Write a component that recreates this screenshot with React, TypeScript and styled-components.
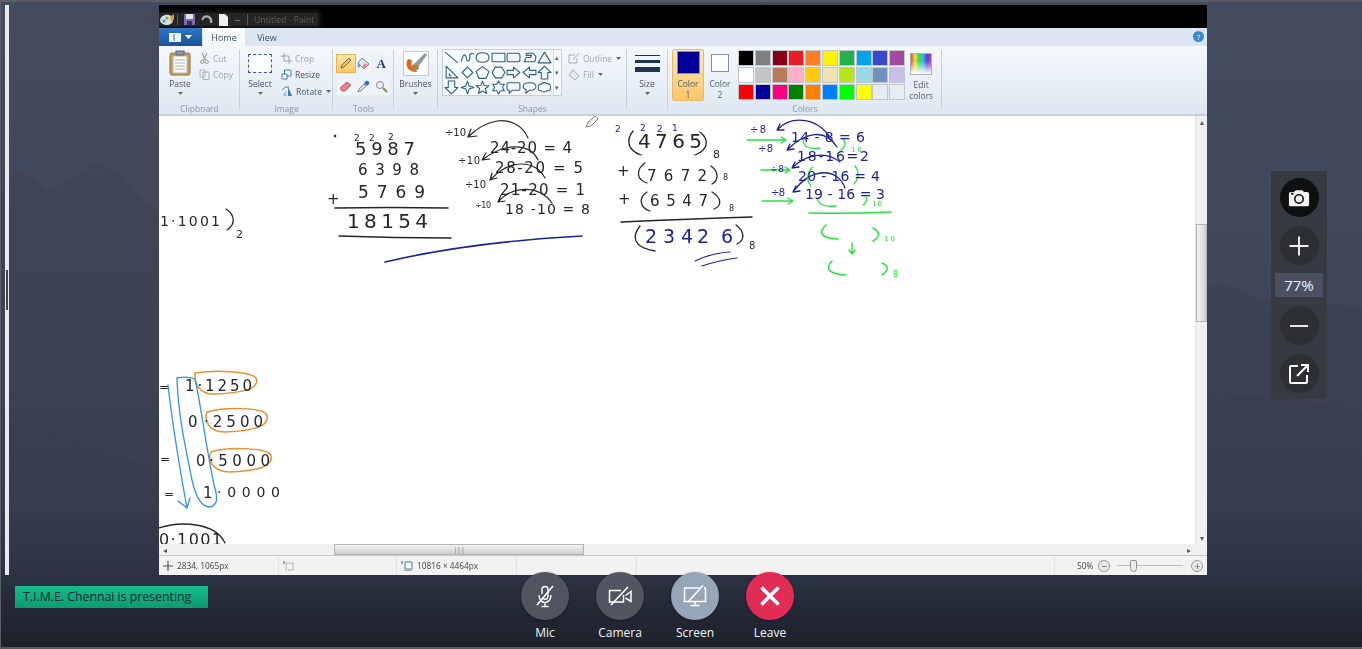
import React from "react";
import styled, { createGlobalStyle } from "styled-components";

const GlobalStyle = createGlobalStyle`
  html, body { margin: 0; padding: 0; background: #1a1d26; }
  * { box-sizing: border-box; }
`;

const UI_FONT = `"Open Sans", "Noto Sans", sans-serif`;

const ROW_ONE = ["#000000", "#7f7f7f", "#880015", "#ed1c24", "#ff7f27", "#fff200", "#22b14c", "#00a2e8", "#3f48cc", "#a349a4"];
const ROW_TWO = ["#ffffff", "#c3c3c3", "#b97a57", "#ffaec9", "#ffc90e", "#efe4b0", "#b5e61d", "#99d9ea", "#7092be", "#c8bfe7"];
const ROW_THREE = ["#ff0000", "#000099", "#ff0080", "#008000", "#ff8000", "#0080ff", "#00ff00", "#ffff00", "#e6edf5", "#e6edf5"];

const SHAPES = [
  "M1 2 L13 12",
  "M1 11 C3 3 5 3 6 8 C7 12 10 10 9 5 C9 3 12 3 13 4",
  "M7 2.5 C11 2.5 13 4.5 13 7 C13 9.5 11 11.5 7 11.5 C3 11.5 1 9.5 1 7 C1 4.5 3 2.5 7 2.5Z",
  "M1 3 H13 V11 H1Z",
  "M3 3 H11 Q13 3 13 5 V9 Q13 11 11 11 H3 Q1 11 1 9 V5 Q1 3 3 3Z",
  "M4 3 H10 L13 6 L12 11 H2 L4 7 H8 L9 5 H4Z",
  "M7 2 L13 12 H1Z",
  "M2 1 L13 12 H2Z M5 8 V10 H7",
  "M7 2 L12 7 L7 12 L2 7Z",
  "M7 1.5 L13 6 L10.5 12.5 H3.5 L1 6Z",
  "M4 2 H10 L13 7 L10 12 H4 L1 7Z",
  "M1 5 H7 V2 L13 7 L7 12 V9 H1Z",
  "M13 5 H7 V2 L1 7 L7 12 V9 H13Z",
  "M7 1 L13 7 H10 V13 H4 V7 H1Z",
  "M4 1 H10 V7 H13 L7 13 L1 7 H4Z",
  "M7 1 L8.5 5.5 L13 7 L8.5 8.5 L7 13 L5.5 8.5 L1 7 L5.5 5.5Z",
  "M7 1 L8.6 5.2 L13 5.4 L9.6 8.2 L10.8 12.6 L7 10.2 L3.2 12.6 L4.4 8.2 L1 5.4 L5.4 5.2Z",
  "M7 1 L8.8 4 H12.5 L10.6 7 L12.5 10 H8.8 L7 13 L5.2 10 H1.5 L3.4 7 L1.5 4 H5.2Z",
  "M2 2.5 H12 Q13 2.5 13 3.5 V8.5 Q13 9.5 12 9.5 H6 L3 12.5 V9.5 H2 Q1 9.5 1 8.5 V3.5 Q1 2.5 2 2.5Z",
  "M7 2.5 C11 2.5 13 4 13 6 C13 8 11 9.5 7 9.5 L3.5 12.5 L4 9 C2 8.5 1 7.5 1 6 C1 4 3 2.5 7 2.5Z",
  "M4 4 C5 2 8 2 9 3.5 C11 3 13 4.5 12.5 6.5 C13.5 8.5 11.5 10.5 9.5 9.8 C8 11.5 5 11.5 4 10 C2 10.5 0.5 8.5 1.5 7 C0.5 5.5 2 3.5 4 4Z",
];

type InkText = [string, number, number, number, number, string];

const BLACK = "#26262a";
const NAVY = "#1f2296";
const GREEN = "#27e23c";

const INK_TEXT: InkText[] = [
  ["2", 354, 141, 7, 9, BLACK], ["2", 369, 141, 7, 9, BLACK], ["2", 388, 140, 7, 9, BLACK],
  ["5987", 355, 155, 60, 18, BLACK],
  ["6398", 358, 175, 61, 15, BLACK],
  ["+", 327, 204, 10, 15, BLACK],
  ["5769", 358, 198, 67, 17, BLACK],
  ["18154", 347, 228, 81, 20, BLACK],
  ["÷10", 445, 136, 21, 10, BLACK],
  ["24-20 = 4", 490, 153, 82, 15, BLACK],
  ["÷10", 458, 164, 22, 10, BLACK],
  ["28-20 = 5", 495, 173, 88, 15, BLACK],
  ["÷10", 465, 188, 21, 10, BLACK],
  ["21-20 = 1", 500, 195, 85, 15, BLACK],
  ["÷10", 475, 208, 16, 8, BLACK],
  ["18 -10 = 8", 505, 214, 85, 14, BLACK],
  ["2", 615, 132, 7, 9, NAVY], ["2", 640, 131, 7, 9, NAVY], ["2", 657, 132, 7, 9, NAVY], ["1", 672, 131, 6, 9, NAVY],
  ["4765", 638, 148, 64, 20, BLACK],
  ["8", 713, 158, 8, 11, BLACK],
  ["+", 617, 176, 11, 15, BLACK],
  ["7672", 647, 181, 60, 15, BLACK],
  ["8", 723, 180, 7, 8, BLACK],
  ["+", 618, 204, 11, 15, BLACK],
  ["6547", 650, 206, 58, 15, BLACK],
  ["8", 729, 211, 7, 8, BLACK],
  ["234", 645, 243, 48, 19, NAVY],
  ["26", 697, 243, 36, 19, NAVY],
  ["8", 749, 249, 8, 10, BLACK],
  ["÷8", 750, 133, 16, 10, NAVY],
  ["14 - 8 = 6", 791, 142, 74, 14, NAVY],
  ["÷8", 758, 152, 15, 10, NAVY],
  ["18-16=2", 797, 161, 72, 14, NAVY],
  ["10", 851, 152, 11, 7, GREEN],
  ["÷8", 770, 172, 14, 9, NAVY],
  ["20 - 16 = 4", 798, 181, 82, 14, NAVY],
  ["÷8", 771, 196, 14, 10, NAVY],
  ["19 - 16 = 3", 805, 199, 80, 14, NAVY],
  ["10", 872, 206, 10, 7, GREEN],
  ["10", 884, 241, 11, 7, GREEN],
  ["8", 893, 277, 7, 8, GREEN],
  ["1·1001", 160, 226, 60, 14, BLACK],
  ["2", 236, 238, 8, 11, BLACK],
  ["=", 159, 391, 7, 12, BLACK],
  ["1·1250", 185, 391, 67, 15, BLACK],
  ["0", 188, 427, 12, 15, BLACK],
  ["·2500", 204, 427, 59, 15, BLACK],
  ["=", 160, 463, 8, 12, BLACK],
  ["0", 196, 466, 12, 15, BLACK],
  ["·5000", 209, 466, 61, 15, BLACK],
  ["=", 164, 498, 9, 12, BLACK],
  ["1", 203, 498, 8, 15, BLACK],
  ["·0000", 217, 497, 63, 14, BLACK],
  ["0·1001", 159, 545, 63, 16, BLACK],
];

type InkStroke = [string, string, number];

const INK_STROKES: InkStroke[] = [
  ["M335 208 Q390 207 448 208", BLACK, 1.5],
  ["M339 236 Q395 238 451 238", BLACK, 1.5],
  ["M385 262 Q470 242 582 236", NAVY, 1.6],
  ["M226 209 C235 215 236 224 227 230", BLACK, 1.3],
  ["M528 138 C522 124 508 119 497 121 C485 123 476 129 468 137 M468 137 L477 136 M468 137 L471 129", BLACK, 1.2],
  ["M538 160 C530 143 505 142 482 160 M482 160 L490 159 M482 160 L486 153", BLACK, 1.2],
  ["M545 178 C535 160 510 158 490 180 M490 180 L497 178 M490 180 L492 173", BLACK, 1.2],
  ["M552 203 C538 184 512 186 498 202 M498 202 L505 201 M498 202 L501 195", BLACK, 1.2],
  ["M633 131 C626 140 627 150 641 155", BLACK, 1.3],
  ["M700 132 C710 140 708 150 695 155", BLACK, 1.3],
  ["M645 163 C635 170 637 180 647 183", BLACK, 1.3],
  ["M711 166 C719 172 719 180 712 184", BLACK, 1.3],
  ["M647 192 C638 198 640 208 650 211", BLACK, 1.3],
  ["M712 192 C722 198 722 206 714 209", BLACK, 1.3],
  ["M621 222 Q690 219 752 217", BLACK, 1.5],
  ["M640 226 C632 236 632 247 655 251", BLACK, 1.3],
  ["M736 225 C745 232 745 240 737 244", BLACK, 1.3],
  ["M695 261 Q712 253 730 252", NAVY, 1.2],
  ["M702 266 Q720 260 737 258", NAVY, 1.2],
  ["M777 130 C790 116 815 116 830 137 M777 130 L784 130 M777 130 L780 124", NAVY, 1.3],
  ["M837 147 C825 128 805 132 787 150 M787 150 L794 149 M787 150 L790 144", NAVY, 1.3],
  ["M840 162 C825 150 805 155 792 168 M792 168 L799 167 M792 168 L795 162", NAVY, 1.3],
  ["M845 188 C838 168 812 166 793 192 M793 192 L800 191 M793 192 L796 186", NAVY, 1.3],
  ["M747 140 H786 M786 140 L781 137 M786 140 L781 143", GREEN, 1.4],
  ["M761 170 H790 M790 170 L785 167 M790 170 L785 173", GREEN, 1.4],
  ["M762 201 H793 M793 201 L788 198 M793 201 L788 204", GREEN, 1.4],
  ["M803 139 C803 147 810 150 820 148", GREEN, 1.3],
  ["M843 139 C847 143 845 147 841 150", GREEN, 1.3],
  ["M813 167 C806 172 807 182 811 186", GREEN, 1.3],
  ["M855 166 C860 172 858 180 854 184", GREEN, 1.3],
  ["M817 198 C818 205 825 207 836 206", GREEN, 1.3],
  ["M866 197 C868 201 866 203 863 205", GREEN, 1.3],
  ["M809 213 Q850 214 891 212", GREEN, 1.5],
  ["M826 225 C818 232 820 238 838 239", GREEN, 1.5],
  ["M873 228 C880 232 881 236 873 241", GREEN, 1.5],
  ["M852 243 V254 M852 254 L849 250 M852 254 L855 250", GREEN, 1.4],
  ["M832 261 C825 268 828 274 846 275", GREEN, 1.5],
  ["M882 263 C889 266 889 270 882 275", GREEN, 1.5],
  ["M195 373 C215 370 250 371 256 378 C260 388 245 393 215 394 C200 395 194 384 195 373Z", "#e88f2e", 1.5],
  ["M207 412 C225 407 262 407 267 415 C270 427 252 431 225 432 C208 432 204 420 207 412Z", "#e88f2e", 1.5],
  ["M211 452 C225 447 265 447 271 455 C274 466 258 471 230 472 C213 472 207 460 211 452Z", "#e88f2e", 1.5],
  ["M177 378 C182 377 190 377 195 379 C200 400 205 440 214 485 C218 498 218 505 210 507 C202 507 196 498 192 480 C186 450 178 415 177 378Z", "#3592dd", 1.3],
  ["M168 385 C172 420 180 470 187 508 M187 508 L178 501 M187 508 L190 498", "#3592dd", 1.3],
  ["M159 528 C180 521 215 522 225 543", BLACK, 1.3],
];

function Caret() {
  return (
    <svg width="7" height="5" viewBox="0 0 7 5">
      <path d="M1 1 H6 L3.5 4Z" fill="#5f6b7a" />
    </svg>
  );
}

function ShapeIcon({ d }: { d: string }) {
  return (
    <svg width="15" height="15" viewBox="0 0 14 14">
      <path d={d} fill="none" stroke="#2c5f82" strokeWidth="1" strokeLinejoin="round" />
    </svg>
  );
}

export default function App() {
  return (
    <Frame>
      <GlobalStyle />
      <Backdrop viewBox="0 0 1362 649" aria-hidden="true">
        <path d="M0 190 L18 168 L50 192 L95 163 L120 172 L135 192 L158 210 L1207 286 L1225 285 L1250 295 L1262 300 L1300 302 L1362 307 V649 H0Z" fill="#2b3444" fillOpacity=".18" />
        <path d="M0 418 L50 432 L159 470 L1207 400 L1270 395 L1362 412 V649 H0Z" fill="#2b3444" fillOpacity=".12" />
      </Backdrop>
      <Stage>
        <LeftRail>
          <RailHandle />
        </LeftRail>
        <PaintWindow>
          <TitleBar>
            <TitleGlow>
              <svg width="16" height="14" viewBox="0 0 16 14">
                <path d="M1 8 C1 3 6 1 10 2 C14 3 15 7 13 10 C10 13 3 13 1 8Z" fill="#d9dfd6" />
                <circle cx="5" cy="8" r="1.5" fill="#3d9ad6" />
                <circle cx="8" cy="5" r="1.5" fill="#6fb04a" />
                <path d="M11 4 L15 1 L15 6 L12 9Z" fill="#d6a23c" />
              </svg>
              <TitleSep $tight />
              <svg width="11" height="11" viewBox="0 0 11 11">
                <path d="M0 0 H11 V11 H0Z" fill="#7d6bb0" />
                <path d="M2 0 H9 V5 H2Z" fill="#e4e2f0" />
                <path d="M3 7 H8 V11 H3Z" fill="#39315c" />
              </svg>
              <svg width="12" height="11" viewBox="0 0 12 11">
                <path d="M10 9 C11 4 7 1 3 3 L1 6" fill="none" stroke="#9fb0ba" strokeWidth="2.2" />
              </svg>
              <svg width="9" height="12" viewBox="0 0 9 12">
                <path d="M0 0 H6 L9 3 V12 H0Z" fill="#f0f0f0" />
              </svg>
              <svg width="7" height="5" viewBox="0 0 7 5">
                <path d="M1 3 H6 V4 H1Z" fill="#777" />
              </svg>
              <TitleSep />
              <TitleText>Untitled - Paint</TitleText>
            </TitleGlow>
          </TitleBar>

          <TabRow>
            <FileButton>
              <svg width="12" height="9" viewBox="0 0 12 9">
                <path d="M0 0 H12 V9 H0Z" fill="#eef4fb" />
                <path d="M5 1 V8" stroke="#2a6fc0" strokeWidth="1" />
              </svg>
              <svg width="7" height="4" viewBox="0 0 7 4">
                <path d="M0 0 H7 L3.5 4Z" fill="#fff" />
              </svg>
            </FileButton>
            <Tab $active>Home</Tab>
            <Tab>View</Tab>
            <HelpDot>?</HelpDot>
          </TabRow>

          <Ribbon>
            <Group $width={81} $pad={5}>
              <GroupBody>
                <LargeTool>
                  <LargeIcon>
                    <svg width="22" height="26" viewBox="0 0 22 26">
                      <rect x="1" y="3" width="20" height="22" rx="2" fill="#c99a5f" stroke="#9b7240" />
                      <rect x="4" y="6" width="14" height="17" fill="#fdfdf6" stroke="#b8b8b0" />
                      <path d="M6 10 H16 M6 13 H16 M6 16 H16 M6 19 H16" stroke="#a6b2bd" />
                      <rect x="7" y="1" width="8" height="4" fill="#8c9aa8" stroke="#5f6b77" />
                    </svg>
                  </LargeIcon>
                  <ToolLabel>Paste</ToolLabel>
                  <Caret />
                </LargeTool>
                <SmallColumn>
                  <SmallRow $muted>
                    <svg width="11" height="11" viewBox="0 0 11 11">
                      <path d="M3 0 L6.5 7 M8 0 L4.5 7" stroke="#8d97a3" strokeWidth="1.1" />
                      <circle cx="3.3" cy="8.8" r="1.7" fill="none" stroke="#8d97a3" />
                      <circle cx="7.7" cy="8.8" r="1.7" fill="none" stroke="#8d97a3" />
                    </svg>
                    Cut
                  </SmallRow>
                  <SmallRow $muted>
                    <svg width="11" height="11" viewBox="0 0 11 11">
                      <path d="M1 1 H6 V8 H1Z M4 3 H10 V10.500 H4Z" fill="#eef2f6" stroke="#aab3bd" />
                    </svg>
                    Copy
                  </SmallRow>
                </SmallColumn>
              </GroupBody>
              <GroupLabel>Clipboard</GroupLabel>
            </Group>

            <Group $width={93} $pad={4}>
              <GroupBody>
                <LargeTool>
                  <LargeIcon>
                    <DashedBox />
                  </LargeIcon>
                  <ToolLabel>Select</ToolLabel>
                  <Caret />
                </LargeTool>
                <SmallColumn $offset={2}>
                  <SmallRow $muted>
                    <svg width="11" height="11" viewBox="0 0 11 11">
                      <path d="M3 0 V8 H11 M0 3 H8 V11" fill="none" stroke="#98a4b0" />
                    </svg>
                    Crop
                  </SmallRow>
                  <SmallRow>
                    <svg width="11" height="11" viewBox="0 0 11 11">
                      <path d="M3.500 1 H10 V7 H3.500Z" fill="#fff" stroke="#3c7ab0" />
                      <path d="M1 5 H6 V10 H1Z" fill="#fff" stroke="#3c7ab0" />
                    </svg>
                    Resize
                  </SmallRow>
                  <SmallRow>
                    <svg width="12" height="11" viewBox="0 0 12 11">
                      <path d="M7 1 L11 10 H7Z" fill="#2f7fb5" />
                      <path d="M1 10 L5 4 L6 10Z" fill="#a9cbe4" />
                      <path d="M1 4 Q4 0 8 1" fill="none" stroke="#6b7785" />
                    </svg>
                    Rotate
                    <Caret />
                  </SmallRow>
                </SmallColumn>
              </GroupBody>
              <GroupLabel>Image</GroupLabel>
            </Group>

            <Group $width={61} $pad={4}>
              <ToolGrid>
                <ToolStrip>
                  <ToolCell $active>
                    <svg width="13" height="13" viewBox="0 0 13 13">
                      <path d="M2 11 L3 8 L10 1 L12 3 L5 10Z" fill="#f2c65c" stroke="#5c4a2a" strokeWidth=".8" />
                    </svg>
                  </ToolCell>
                  <ToolCell>
                    <svg width="13" height="13" viewBox="0 0 13 13">
                      <path d="M5 1 L12 7 L7 12 L1 6Z" fill="#dfe8f0" stroke="#7c8a98" />
                      <path d="M1 6 C0 9 1 11 2 11 C3 10 3 8 3 7Z" fill="#4e9be0" />
                      <path d="M8 6 L11 8 L7 12 L5 10Z" fill="#e88a8a" />
                    </svg>
                  </ToolCell>
                  <ToolCell $serif>A</ToolCell>
                </ToolStrip>
                <ToolStrip>
                  <ToolCell>
                    <svg width="13" height="11" viewBox="0 0 13 11">
                      <path d="M1 7 L8 1 L12 4 L6 10 H3Z" fill="#e8828c" stroke="#b9616b" />
                    </svg>
                  </ToolCell>
                  <ToolCell>
                    <svg width="13" height="13" viewBox="0 0 13 13">
                      <path d="M1 12 L2 9 L7 4 L9 6 L4 11Z" fill="#cfe3f2" stroke="#7c8a98" />
                      <path d="M7 3 L9 1 C11 0 13 2 12 4 L10 6Z" fill="#2d6fb5" />
                    </svg>
                  </ToolCell>
                  <ToolCell>
                    <svg width="13" height="13" viewBox="0 0 13 13">
                      <circle cx="5" cy="5" r="3.500" fill="#e8f2fa" stroke="#7c8a98" />
                      <path d="M8 8 L12 12" stroke="#a07a45" strokeWidth="2" />
                    </svg>
                  </ToolCell>
                </ToolStrip>
              </ToolGrid>
              <GroupLabel>Tools</GroupLabel>
            </Group>

            <Group $width={44}>
              <GroupBody>
                <LargeTool $width={43}>
                  <LargeIcon>
                    <svg width="26" height="25" viewBox="0 0 26 25">
                      <rect x="0.500" y="0.500" width="25" height="24" fill="#fff" stroke="#c2ccd6" />
                      <path d="M5 8 C1 14 5 22 15 21 C9 19 7 14 9 9Z" fill="#e8621f" />
                      <path d="M11 13 L22 2 L24 4 L15 16Z" fill="#8e99a5" />
                      <path d="M9 14 C12 12 16 14 16 17 C14 21 9 21 7 19Z" fill="#b57f45" />
                    </svg>
                  </LargeIcon>
                  <ToolLabel>Brushes</ToolLabel>
                  <Caret />
                </LargeTool>
              </GroupBody>
            </Group>

            <Group $width={189} $pad={4}>
              <GroupBody>
                <ShapeGallery>
                  <ShapeGrid>
                    {SHAPES.map((d) => (
                      <ShapeIcon key={d} d={d} />
                    ))}
                  </ShapeGrid>
                  <GalleryScroll>
                    <GalleryStep>▴</GalleryStep>
                    <GalleryStep>▾</GalleryStep>
                    <GalleryStep>▾</GalleryStep>
                  </GalleryScroll>
                </ShapeGallery>
                <SmallColumn $offset={3}>
                  <SmallRow $muted>
                    <svg width="12" height="12" viewBox="0 0 12 12">
                      <path d="M1 3 H7 M1 3 V11 H9 V6 M5 8 L11 1" fill="none" stroke="#a4aeb9" />
                    </svg>
                    Outline
                    <Caret />
                  </SmallRow>
                  <SmallRow $muted>
                    <svg width="12" height="12" viewBox="0 0 12 12">
                      <path d="M5 1 L11 7 L7 11 L1 6Z" fill="#e6ecf2" stroke="#a4aeb9" />
                    </svg>
                    Fill
                    <Caret />
                  </SmallRow>
                </SmallColumn>
              </GroupBody>
              <GroupLabel>Shapes</GroupLabel>
            </Group>

            <Group $width={41}>
              <GroupBody>
                <LargeTool $width={40}>
                  <LargeIcon>
                    <SizeLines>
                      <SizeLine $weight={1} />
                      <SizeLine $weight={3} />
                      <SizeLine $weight={5} />
                    </SizeLines>
                  </LargeIcon>
                  <ToolLabel>Size</ToolLabel>
                  <Caret />
                </LargeTool>
              </GroupBody>
            </Group>

            <Group $width={274} $pad={4}>
              <GroupBody>
                <ColorPick $active>
                  <ColorChip $color="#000099" $size={23} />
                  <ColorText>
                    Color
                    <br />1
                  </ColorText>
                </ColorPick>
                <ColorPick>
                  <ColorChip $color="#ffffff" $size={18} />
                  <ColorText>
                    Color
                    <br />2
                  </ColorText>
                </ColorPick>
                <Palette>
                  {[...ROW_ONE, ...ROW_TWO, ...ROW_THREE].map((color, i) => (
                    <Swatch key={i} $color={color} />
                  ))}
                </Palette>
                <EditColors>
                  <Spectrum />
                  <ColorText>
                    Edit
                    <br />
                    colors
                  </ColorText>
                </EditColors>
              </GroupBody>
              <GroupLabel>Colors</GroupLabel>
            </Group>
          </Ribbon>

          <CanvasRow>
            <Canvas>
              <svg width="1036" height="428" viewBox="159 116 1036 428">
                {INK_STROKES.map(([d, color, width], i) => (
                  <path key={i} d={d} fill="none" stroke={color} strokeWidth={width} strokeLinecap="round" />
                ))}
                <circle cx="335" cy="136" r="1.3" fill={BLACK} />
                {INK_TEXT.map(([text, x, y, w, size, color], i) => (
                  <InkLabel key={i} x={x} y={y} textLength={w} lengthAdjust="spacing" $size={size} fill={color}>
                    {text}
                  </InkLabel>
                ))}
                <path d="M586 127 L588 122 L595 116 L598 119 L591 126Z" fill="#f4f4f4" stroke="#777" strokeWidth=".9" />
              </svg>
            </Canvas>
            <VerticalScroll>
              <ScrollArrow>▴</ScrollArrow>
              <VerticalThumb />
              <ScrollArrow $end>▾</ScrollArrow>
            </VerticalScroll>
          </CanvasRow>

          <HorizontalScroll>
            <ScrollArrow>◂</ScrollArrow>
            <HorizontalThumb>
              <Grip>|||</Grip>
            </HorizontalThumb>
            <ScrollArrow $end>▸</ScrollArrow>
          </HorizontalScroll>

          <StatusBar>
            <StatusCell $width={120}>
              <svg width="10" height="10" viewBox="0 0 10 10">
                <path d="M5 0 V10 M0 5 H10" stroke="#4a5662" strokeWidth="1.2" />
              </svg>
              2834, 1065px
            </StatusCell>
            <StatusCell $width={118}>
              <svg width="11" height="10" viewBox="0 0 11 10">
                <path d="M3 2 H10 V9 H3Z" fill="none" stroke="#8a949e" strokeDasharray="1.500 1" />
                <path d="M1 0 V3" stroke="#4a5662" />
              </svg>
            </StatusCell>
            <StatusCell $width={120}>
              <svg width="12" height="10" viewBox="0 0 12 10">
                <path d="M4 1 H11 V8 H4Z" fill="#f5f9fc" stroke="#4d7a9e" />
                <path d="M1 0 V3 M3 10 H11" stroke="#4a5662" />
              </svg>
              10816 × 4464px
            </StatusCell>
            <StatusCell $width={120} />
            <StatusCell $width={418} />
            <ZoomStatus>
              <span>50%</span>
              <RoundStep>−</RoundStep>
              <ZoomTrack>
                <ZoomKnob />
              </ZoomTrack>
              <RoundStep>+</RoundStep>
            </ZoomStatus>
          </StatusBar>
        </PaintWindow>

        <ZoomPanel>
          <PanelButton $dark>
            <svg width="22" height="22" viewBox="0 0 24 24">
              <path d="M8.500 3.500 H15.500 L17.500 5.500 H21 Q23 5.500 23 7.500 V19 Q23 21 21 21 H3 Q1 21 1 19 V7.500 Q1 5.500 3 5.500 H6.500Z" fill="#f1f1f1" />
              <circle cx="12" cy="13" r="4.600" fill="none" stroke="#111" strokeWidth="1.700" />
              <rect x="3.200" y="6.400" width="2.800" height="1.900" fill="#111" />
            </svg>
          </PanelButton>
          <PanelButton>
            <svg width="22" height="22" viewBox="0 0 22 22">
              <path d="M11 1.500 V20.500 M1.500 11 H20.500" stroke="#f2f2f2" strokeWidth="1.900" />
            </svg>
          </PanelButton>
          <ZoomValue>77%</ZoomValue>
          <PanelButton>
            <svg width="22" height="22" viewBox="0 0 22 22">
              <path d="M2 11 H20" stroke="#f2f2f2" strokeWidth="1.900" />
            </svg>
          </PanelButton>
          <PanelButton>
            <svg width="22" height="22" viewBox="0 0 22 22">
              <path d="M10 3 H3 Q2 3 2 4 V19 Q2 20 3 20 H18 Q19 20 19 19 V12" fill="none" stroke="#fff" strokeWidth="2" />
              <path d="M9 13 L20 2 M13 2 H20 V9" fill="none" stroke="#fff" strokeWidth="2" />
            </svg>
          </PanelButton>
        </ZoomPanel>
      </Stage>

      <BottomBar>
        <PresenterBadge>T.I.M.E. Chennai is presenting</PresenterBadge>
        <Controls>
          <Control>
            <ControlCircle $color="#50555f">
              <svg width="26" height="26" viewBox="0 0 26 26" fill="none" stroke="#fff" strokeWidth="1.400">
                <path d="M10 11 V6.500 C10 2.500 16 2.500 16 6.500 V13 C16 14 15.500 15 15 15.500 M10.500 14.500 C11.500 16.500 14 16.800 15 15.500" />
                <path d="M7 12 C7 16 9.500 19.500 13 19.500 C16.500 19.500 19 16 19 12 M13 19.500 V23 M9.500 23.500 H16.500" />
                <path d="M5 22 L21 3" strokeWidth="1.600" />
              </svg>
            </ControlCircle>
            <ControlLabel>Mic</ControlLabel>
          </Control>
          <Control>
            <ControlCircle $color="#50555f">
              <svg width="26" height="26" viewBox="0 0 26 26" fill="none" stroke="#fff" strokeWidth="1.500">
                <path d="M14 7.500 H2.500 V19 H16.500 V12" />
                <path d="M18.500 12.500 L24 8.500 V18.500 L18.500 15" />
                <path d="M4 22 L21 4" strokeWidth="1.600" />
              </svg>
            </ControlCircle>
            <ControlLabel>Camera</ControlLabel>
          </Control>
          <Control>
            <ControlCircle $color="#97a5b8">
              <svg width="26" height="26" viewBox="0 0 26 26" fill="none" stroke="#fff" strokeWidth="1.500">
                <path d="M19 5 H2.500 V18.500 H23.500 V5 H22" />
                <path d="M13 18.500 V22 M8.500 22.500 H17.500" />
                <path d="M6 19 L21 2.500" strokeWidth="1.600" />
              </svg>
            </ControlCircle>
            <ControlLabel>Screen</ControlLabel>
          </Control>
          <Control>
            <ControlCircle $color="#e12c54">
              <svg width="24" height="24" viewBox="0 0 24 24">
                <path d="M3.500 3.500 L20.500 20.500 M20.500 3.500 L3.500 20.500" stroke="#fff" strokeWidth="3.600" />
              </svg>
            </ControlCircle>
            <ControlLabel>Leave</ControlLabel>
          </Control>
        </Controls>
      </BottomBar>
    </Frame>
  );
}

const Frame = styled.div`
  position: relative;
  width: 1362px;
  height: 649px;
  overflow: hidden;
  border-top: 2px solid #5c5e63;
  border-bottom: 2px solid #55585e;
  border-left: 1px solid #5c5e63;
  background: linear-gradient(180deg, #434c5e 0%, #414a5c 30%, #3a4355 78%, #2f3647 88%, #242934 93%, #191c24 100%);
  font-family: ${UI_FONT};
`;

const Backdrop = styled.svg`
  position: absolute;
  left: -1px;
  top: -2px;
  width: 1362px;
  height: 649px;
  pointer-events: none;
`;

const Stage = styled.div`
  position: relative;
  display: flex;
  height: 573px;
  padding-top: 3px;
`;

const LeftRail = styled.div`
  width: 4px;
  height: 570px;
  margin-left: 4px;
  background: #e9e9e9;
  padding-top: 265px;
  display: flex;
  justify-content: center;
`;

const RailHandle = styled.div`
  width: 2px;
  height: 40px;
  background: #444;
`;

const PaintWindow = styled.div`
  width: 1048px;
  height: 570px;
  margin-left: 150px;
  display: flex;
  flex-direction: column;
  background: #fff;
  filter: blur(0.35px);
`;

const TitleBar = styled.div`
  flex: none;
  height: 23px;
  background: #000;
  display: flex;
  align-items: flex-end;
  padding-bottom: 2px;
`;

const TitleGlow = styled.div`
  display: flex;
  align-items: center;
  gap: 6px;
  height: 13px;
  padding-right: 4px;
  background: rgba(74, 74, 74, 0.5);
  box-shadow: 0 0 5px 2px rgba(74, 74, 74, 0.4);
`;

const TitleSep = styled.span<{ $tight?: boolean }>`
  width: 1px;
  height: 11px;
  margin-left: ${(p) => (p.$tight ? -4 : 0)}px;
  background: #5a5a5a;
`;

const TitleText = styled.span`
  font-size: 8.700px;
  color: #5e5e5e;
`;

const TabRow = styled.div`
  flex: none;
  height: 18px;
  display: flex;
  align-items: stretch;
  background: #dbe6f2;
`;

const FileButton = styled.div`
  width: 43px;
  display: flex;
  align-items: center;
  justify-content: center;
  gap: 4px;
  background: linear-gradient(180deg, #2f78c9, #1a5299);
`;

const Tab = styled.div<{ $active?: boolean }>`
  width: ${(p) => (p.$active ? 42 : 40)}px;
  margin-left: ${(p) => (p.$active ? 1 : 2)}px;
  display: flex;
  align-items: center;
  justify-content: center;
  font-size: 9px;
  color: #3b4d63;
  background: ${(p) => (p.$active ? "linear-gradient(180deg, #fafcff, #f4f8fc)" : "transparent")};
`;

const HelpDot = styled.div`
  width: 11px;
  height: 11px;
  margin: 3px 3px 0 auto;
  border-radius: 50%;
  background: #3c87d0;
  color: #fff;
  font-size: 8px;
  line-height: 11px;
  text-align: center;
`;

const Ribbon = styled.div`
  flex: none;
  height: 70px;
  display: flex;
  background: linear-gradient(180deg, #f4f8fc, #dde7f1);
  box-shadow: inset 0 -2px 0 #c6d0db;
`;

const Group = styled.div<{ $width: number; $pad?: number }>`
  position: relative;
  width: ${(p) => p.$width}px;
  flex: none;
  display: flex;
  flex-direction: column;
  padding: 2px 0 0 ${(p) => p.$pad ?? 0}px;

  &::after {
    content: "";
    position: absolute;
    right: 0;
    top: 4px;
    bottom: 7px;
    width: 1px;
    background: #c6d1dd;
  }
`;

const GroupBody = styled.div`
  flex: 1;
  display: flex;
  align-items: flex-start;
`;

const GroupLabel = styled.div`
  position: absolute;
  left: 0;
  right: 0;
  bottom: 0;
  height: 14px;
  line-height: 14px;
  text-align: center;
  font-size: 8.500px;
  color: #8b98a7;
`;

const LargeTool = styled.div<{ $width?: number }>`
  width: ${(p) => p.$width ?? 32}px;
  flex: none;
  display: flex;
  flex-direction: column;
  align-items: center;
`;

const LargeIcon = styled.div`
  height: 30px;
  display: flex;
  align-items: center;
  justify-content: center;
`;

const ToolLabel = styled.div`
  height: 12px;
  line-height: 12px;
  font-size: 8.500px;
  color: #44546a;
  margin-bottom: 1px;
`;

const SmallColumn = styled.div<{ $offset?: number }>`
  margin-left: ${(p) => p.$offset ?? 0}px;
  padding-top: 2px;
  display: flex;
  flex-direction: column;
`;

const SmallRow = styled.div<{ $muted?: boolean }>`
  height: 16.500px;
  display: flex;
  align-items: center;
  gap: 3px;
  padding-left: 3px;
  font-size: 8.500px;
  white-space: nowrap;
  color: ${(p) => (p.$muted ? "#9aa6b3" : "#44566a")};
`;

const DashedBox = styled.div`
  width: 24px;
  height: 19px;
  border: 1px dashed #3f5f80;
  background: #fbfdff;
`;

const ToolGrid = styled.div`
  display: flex;
  flex-direction: column;
  gap: 6px;
  padding-top: 7px;
`;

const ToolStrip = styled.div`
  display: flex;
  width: 53px;
  height: 17px;
  background: #eef3f8;
  border-radius: 2px;
`;

const ToolCell = styled.div<{ $active?: boolean; $serif?: boolean }>`
  flex: 1;
  display: flex;
  align-items: center;
  justify-content: center;
  background: ${(p) => (p.$active ? "linear-gradient(180deg, #fde7a8, #f8c766)" : "transparent")};
  outline: ${(p) => (p.$active ? "1px solid #e3b35a" : "none")};
  font: ${(p) => (p.$serif ? `bold 13px "Liberation Serif", serif` : "inherit")};
  color: #1f3a5c;
`;

const ShapeGallery = styled.div`
  width: 120px;
  height: 47px;
  margin-top: 1px;
  display: flex;
  background: #f7fafc;
  border: 1px solid #c5d0dc;
`;

const ShapeGrid = styled.div`
  flex: 1;
  display: grid;
  grid-template-columns: repeat(7, 15.500px);
  grid-auto-rows: 15px;
  align-content: center;
  padding-left: 1px;
`;

const GalleryScroll = styled.div`
  width: 10px;
  display: flex;
  flex-direction: column;
  border-left: 1px solid #d4dde6;
`;

const GalleryStep = styled.div`
  flex: 1;
  font-size: 7px;
  line-height: 15px;
  text-align: center;
  color: #57636f;
`;

const SizeLines = styled.div`
  width: 25px;
  display: flex;
  flex-direction: column;
  gap: 4px;
  margin-top: 1px;
`;

const SizeLine = styled.div<{ $weight: number }>`
  height: ${(p) => p.$weight}px;
  background: #1f3550;
`;

const ColorPick = styled.div<{ $active?: boolean }>`
  width: 32px;
  height: 52px;
  flex: none;
  margin-top: 1px;
  display: flex;
  flex-direction: column;
  align-items: center;
  justify-content: flex-end;
  border-radius: 2px;
  border: 1px solid ${(p) => (p.$active ? "#e7b869" : "transparent")};
  background: ${(p) => (p.$active ? "linear-gradient(180deg, #fdebba, #fbc566)" : "transparent")};
`;

const ColorChip = styled.div<{ $color: string; $size: number }>`
  width: ${(p) => p.$size}px;
  height: ${(p) => p.$size}px;
  margin-bottom: ${(p) => (p.$size > 20 ? 4 : 6)}px;
  background: ${(p) => p.$color};
  border: 1px solid #8b8f94;
`;

const ColorText = styled.div`
  height: 22px;
  font-size: 8.500px;
  line-height: 11px;
  text-align: center;
  color: #50606f;
`;

const Palette = styled.div`
  display: grid;
  grid-template-columns: repeat(10, 16px);
  grid-auto-rows: 16px;
  gap: 0.800px;
  margin: 2px 0 0 2px;
`;

const Swatch = styled.div<{ $color: string }>`
  background: ${(p) => p.$color};
  border: 1px solid #c0c6cc;
`;

const EditColors = styled.div`
  width: 36px;
  display: flex;
  flex-direction: column;
  align-items: center;
  margin-left: -2px;
`;

const Spectrum = styled.div`
  width: 22px;
  height: 22px;
  margin: 5px 0 4px;
  border: 1px solid #a9b2bb;
  background: linear-gradient(180deg, transparent 35%, #fff 100%),
    linear-gradient(90deg, #f03a3a, #f5e23a, #3ad94a, #35b8e8, #4a45d0, #c23ab8);
`;

const CanvasRow = styled.div`
  flex: none;
  height: 428px;
  display: flex;
`;

const Canvas = styled.div`
  flex: 1;
  overflow: hidden;
  background: #fff;

  svg {
    display: block;
  }
`;

const InkLabel = styled.text<{ $size: number }>`
  font-family: "DejaVu Sans", sans-serif;
  font-size: ${(p) => p.$size}px;
`;

const VerticalScroll = styled.div`
  width: 12px;
  flex: none;
  display: flex;
  flex-direction: column;
  background: #f0f0f0;
  border-left: 1px solid #e2e2e2;
`;

const ScrollArrow = styled.div<{ $end?: boolean }>`
  flex: none;
  width: 12px;
  height: 12px;
  margin: ${(p) => (p.$end ? "auto 0 0 auto" : "0")};
  font-size: 8px;
  line-height: 12px;
  text-align: center;
  color: #55595e;
`;

const VerticalThumb = styled.div`
  width: 11px;
  height: 98px;
  margin-top: 96px;
  background: linear-gradient(90deg, #f4f4f4, #d2d2d2);
  border: 1px solid #b4b4b4;
`;

const HorizontalScroll = styled.div`
  flex: none;
  height: 12px;
  display: flex;
  padding-right: 12px;
  background: #f0f0f0;
  border-bottom: 1px solid #c9c9c9;
`;

const HorizontalThumb = styled.div`
  width: 250px;
  margin-left: 163px;
  background: linear-gradient(180deg, #f2f2f2, #cfcfcf);
  border: 1px solid #b4b4b4;
  display: flex;
  align-items: center;
  justify-content: center;
`;

const Grip = styled.span`
  font-size: 7px;
  line-height: 8px;
  color: #777;
`;

const StatusBar = styled.div`
  flex: 1;
  display: flex;
  background: #f2f2f2;
  font-size: 8.300px;
  color: #3f444a;
`;

const StatusCell = styled.div<{ $width: number }>`
  width: ${(p) => p.$width}px;
  flex: none;
  display: flex;
  align-items: center;
  gap: 4px;
  padding-left: 4px;
  border-right: 1px solid #e2e2e2;
`;

const ZoomStatus = styled.div`
  flex: 1;
  display: flex;
  align-items: center;
  padding-left: 22px;
`;

const RoundStep = styled.div`
  width: 12px;
  height: 12px;
  flex: none;
  margin-left: 5px;
  border: 1px solid #9a9a9a;
  border-radius: 50%;
  background: #e9e9e9;
  font-size: 10px;
  line-height: 10px;
  text-align: center;
  color: #555;
`;

const ZoomTrack = styled.div`
  width: 66px;
  height: 1px;
  margin: 0 3px 0 7px;
  background: #bdbdbd;
  display: flex;
  align-items: center;
  padding-left: 13px;
`;

const ZoomKnob = styled.div`
  width: 7px;
  height: 12px;
  flex: none;
  border: 1px solid #8f8f8f;
  border-radius: 2px 2px 4px 4px;
  background: #ececec;
`;

const ZoomPanel = styled.div`
  width: 56px;
  height: 228px;
  flex: none;
  align-self: flex-start;
  margin: 166px 0 0 64px;
  padding: 7px 0;
  display: flex;
  flex-direction: column;
  align-items: center;
  gap: 9px;
  background: #363b42;
`;

const PanelButton = styled.div<{ $dark?: boolean }>`
  width: 39px;
  height: 39px;
  flex: none;
  border-radius: 50%;
  display: flex;
  align-items: center;
  justify-content: center;
  background: ${(p) => (p.$dark ? "#0f1012" : "#2e2f33")};
`;

const ZoomValue = styled.div`
  width: 48px;
  height: 24px;
  flex: none;
  margin-top: -1px;
  background: #49505f;
  color: #f0f6ff;
  font-size: 15px;
  line-height: 24px;
  text-align: center;
`;

const BottomBar = styled.div`
  position: relative;
  display: flex;
  align-items: flex-start;
`;

const PresenterBadge = styled.div`
  width: 193px;
  height: 22px;
  margin: 11px 0 0 14px;
  padding-left: 8px;
  flex: none;
  font-size: 12.300px;
  line-height: 21px;
  white-space: nowrap;
  color: #12282f;
  background: linear-gradient(180deg, #13bd8a, #0f9a70);
`;

const Controls = styled.div`
  display: flex;
  margin: -3px 0 0 299.500px;
`;

const Control = styled.div`
  width: 75px;
  display: flex;
  flex-direction: column;
  align-items: center;
  gap: 5px;
`;

const ControlCircle = styled.div<{ $color: string }>`
  width: 48px;
  height: 48px;
  border-radius: 50%;
  display: flex;
  align-items: center;
  justify-content: center;
  background: ${(p) => p.$color};
  box-shadow: 0 1px 3px rgba(0, 0, 0, 0.35);
`;

const ControlLabel = styled.div`
  height: 16px;
  font-size: 12px;
  line-height: 16px;
  color: #f2f4f7;
`;
